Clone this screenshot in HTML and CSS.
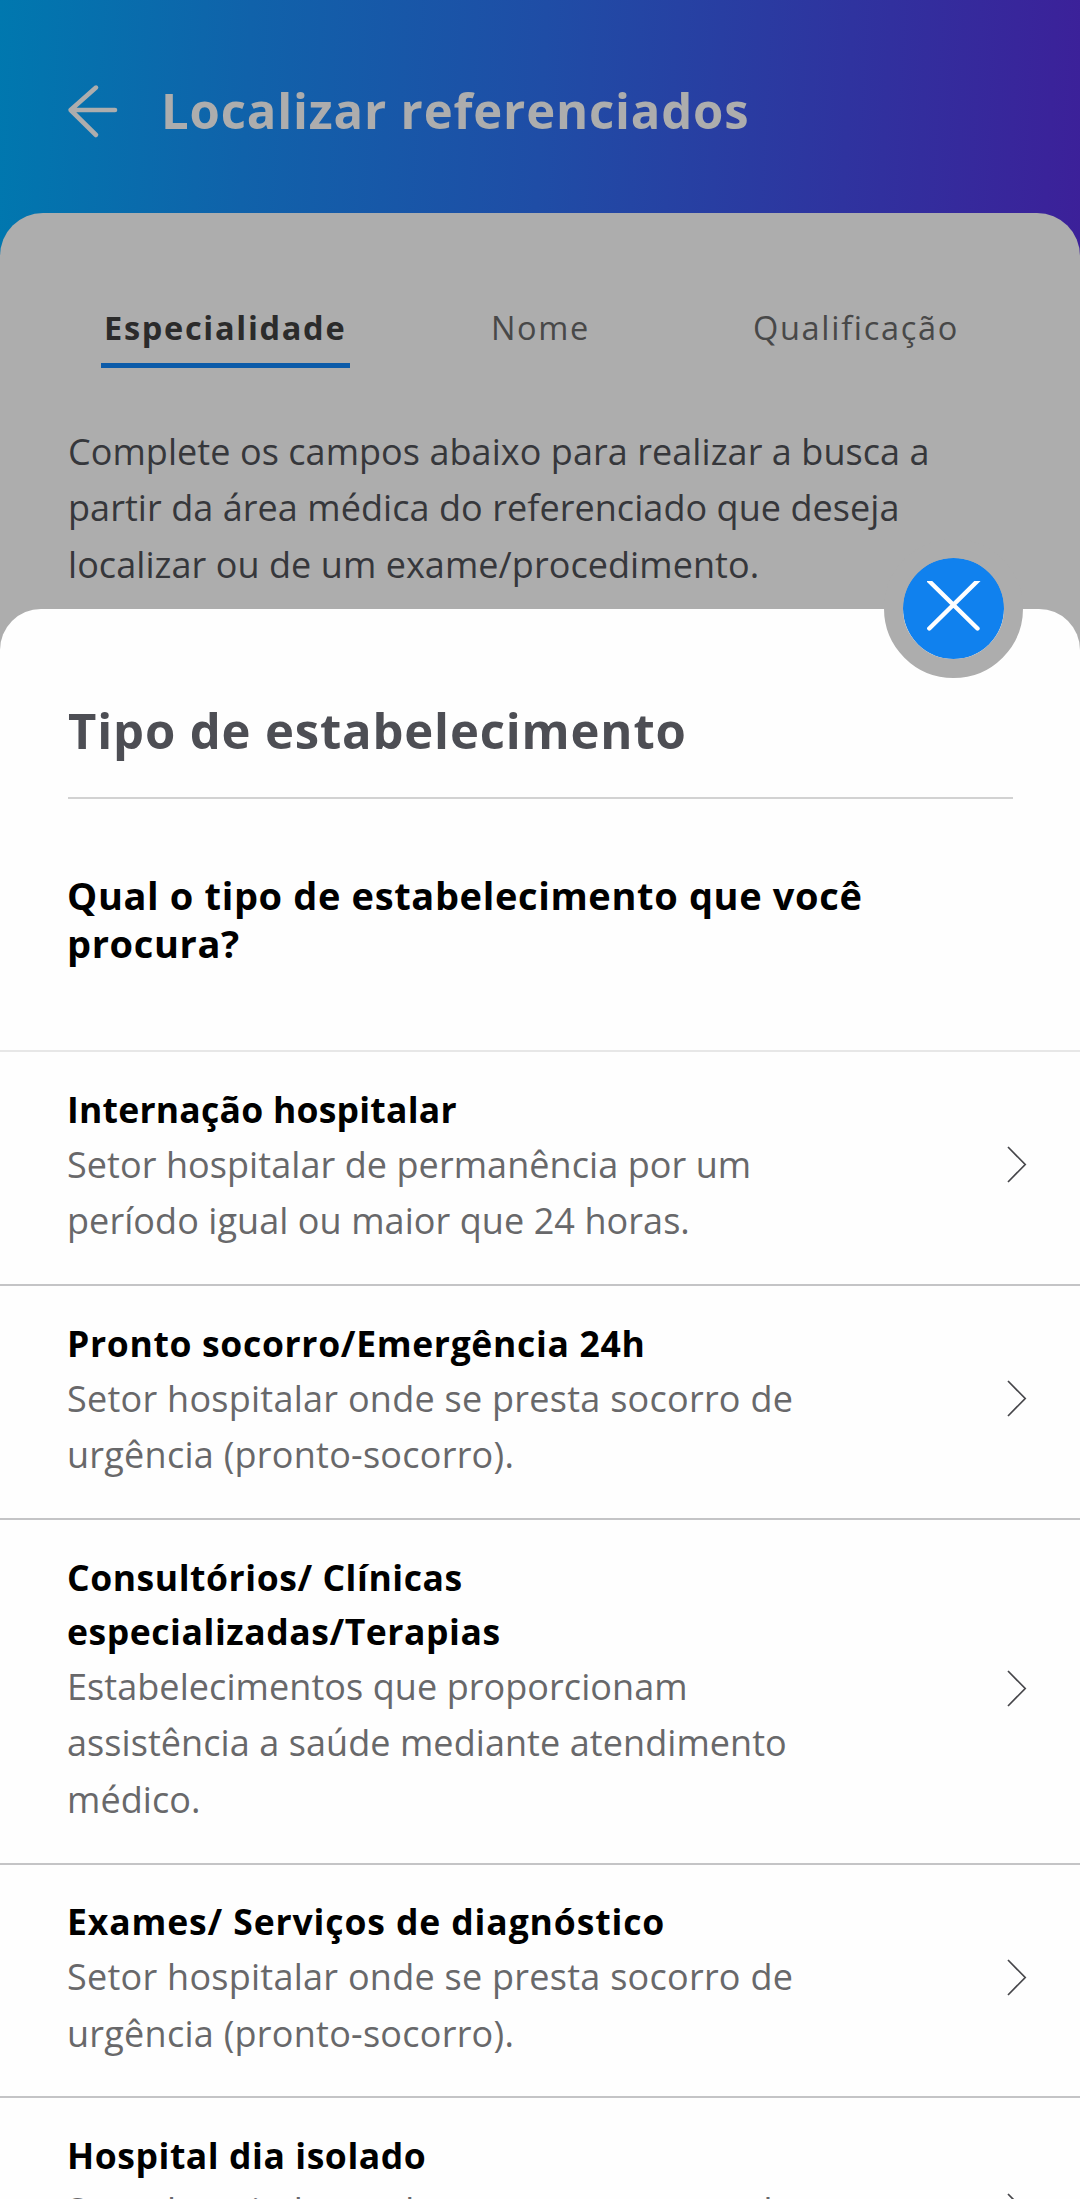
FILE: index.html
```html
<!DOCTYPE html>
<html lang="pt-BR">
<head>
<meta charset="utf-8">
<title>Localizar referenciados</title>
<link rel="stylesheet" href="styles.css">
</head>
<body>
<div class="screen">
  <header class="header">
    <svg class="back" viewBox="0 0 50 54" fill="none" stroke="currentColor" stroke-width="4.6" stroke-linecap="round" stroke-linejoin="round"><path d="M47 27H2.6M28 4.6 2.6 27 28 52"/></svg>
    <h1 class="header-title">Localizar referenciados</h1>
  </header>
  <main class="page">
    <nav class="tabs">
      <span class="tab tab-active">Especialidade</span>
      <span class="tab tab-name">Nome</span>
      <span class="tab">Qualificação</span>
    </nav>
    <p class="intro">Complete os campos abaixo para realizar a busca a<br>partir da área médica do referenciado que deseja<br>localizar ou de um exame/procedimento.</p>
    <section class="sheet">
      <div class="close">
        <svg class="close-icon" viewBox="0 0 54 50" fill="none" stroke="currentColor" stroke-width="4.4" stroke-linecap="round"><path d="M-1 -3 50.5 47.5M53.5 -3 2.3 47.5"/></svg>
      </div>
      <h2 class="sheet-title">Tipo de estabelecimento</h2>
      <h3 class="question">Qual o tipo de estabelecimento que você<br>procura?</h3>
      <ul class="list">
        <li class="item">
          <div><h4 class="name tight">Internação hospitalar</h4><p class="desc">Setor hospitalar de permanência por um<br>período igual ou maior que 24 horas.</p></div>
          <svg class="chevron" viewBox="0 0 20 37"><path d="M1 1 18.2 18.5 1 36"/></svg>
        </li>
        <li class="item">
          <div><h4 class="name">Pronto socorro/Emergência 24h</h4><p class="desc wide">Setor hospitalar onde se presta socorro de<br>urgência (pronto-socorro).</p></div>
          <svg class="chevron" viewBox="0 0 20 37"><path d="M1 1 18.2 18.5 1 36"/></svg>
        </li>
        <li class="item">
          <div><h4 class="name medium">Consultórios/ Clínicas<br>especializadas/Terapias</h4><p class="desc">Estabelecimentos que proporcionam<br>assistência a saúde mediante atendimento<br>médico.</p></div>
          <svg class="chevron" viewBox="0 0 20 37"><path d="M1 1 18.2 18.5 1 36"/></svg>
        </li>
        <li class="item">
          <div><h4 class="name loose">Exames/ Serviços de diagnóstico</h4><p class="desc wide">Setor hospitalar onde se presta socorro de<br>urgência (pronto-socorro).</p></div>
          <svg class="chevron" viewBox="0 0 20 37"><path d="M1 1 18.2 18.5 1 36"/></svg>
        </li>
        <li class="item">
          <div><h4 class="name medium">Hospital dia isolado</h4><p class="desc wide">Setor hospitalar onde se presta socorro de<br>urgência (pronto-socorro).</p></div>
          <svg class="chevron" viewBox="0 0 20 37"><path d="M1 1 18.2 18.5 1 36"/></svg>
        </li>
      </ul>
    </section>
  </main>
</div>
</body>
</html>
```
FILE: styles.css
```css
* { box-sizing: border-box; margin: 0; padding: 0; }
body { font-family: "Open Sans", "Noto Sans", sans-serif; background: #fefefe; }
.screen {
  height: 2199px;
  overflow: hidden;
  background: linear-gradient(93deg, #0078af 0, #1062aa 23%, #1f4da6 50%, #2f339f 78%, #3c2099 100%) no-repeat 0 0 / 100% 270px;
}
.header { height: 213px; display: flex; align-items: flex-start; color: #adadad; }
.back { width: 50px; height: 54px; margin: 83px 0 0 68px; overflow: visible; }
.header-title { margin: 77px 0 0 43px; font-size: 49px; line-height: 66px; letter-spacing: .84px; white-space: nowrap; }

.page { background: #adadad; border-radius: 43px 43px 0 0; padding-top: 90px; }
.tabs { height: 65px; padding: 0 121px 0 101px; display: flex; justify-content: space-between; align-items: flex-start; }
.tab { font-size: 32.5px; line-height: 50px; letter-spacing: 1.7px; color: #484848; }
.tab-name { margin-right: 22px; }
.tab-active { height: 65px; width: 249px; padding-left: 3px; font-weight: 700; color: #2b2b2b; border-bottom: 5px solid #0c5ba9; }
.intro { height: 241px; padding: 56px 0 0 68px; font-size: 36px; line-height: 56.4px; letter-spacing: .06px; color: #36373b; white-space: nowrap; }

.sheet { position: relative; height: 1590px; padding-top: 88px; background: #fefefe; border-radius: 41px 41px 0 0; }
.close { position: absolute; left: 884px; top: -70px; width: 139px; height: 139px; border-radius: 50%; border: 19px solid #adadad; background: #1081ee; color: #fefefe; background-clip: padding-box; }
.close-icon { display: block; width: 54px; height: 50px; margin: 23px 0 0 24px; }
.sheet-title { height: 102px; margin: 0 67px 0 68px; border-bottom: 2px solid #d2d2d2; font-size: 49px; line-height: 66px; letter-spacing: .85px; color: #4d4e54; white-space: nowrap; }
.question { height: 253px; padding: 72px 0 0 67px; border-bottom: 2px solid #e7e7e7; font-size: 38px; line-height: 48px; letter-spacing: .64px; color: #000; white-space: nowrap; }
.list { list-style: none; }
.item { display: flex; justify-content: space-between; align-items: center; padding: 29.9px 53px 33.9px 67px; border-bottom: 2px solid #c4c4c6; white-space: nowrap; }
.name { font-size: 35.5px; line-height: 54px; letter-spacing: .67px; color: #000; }
.tight { letter-spacing: .24px; }
.medium { letter-spacing: .56px; }
.loose { letter-spacing: .88px; }
.desc { padding-top: 1px; font-size: 36px; line-height: 56.6px; letter-spacing: .07px; color: #68686a; }
.wide { letter-spacing: .26px; }
.chevron { width: 20px; height: 37px; margin-bottom: 2px; fill: none; stroke: #46464a; stroke-width: 1.7; }
```
